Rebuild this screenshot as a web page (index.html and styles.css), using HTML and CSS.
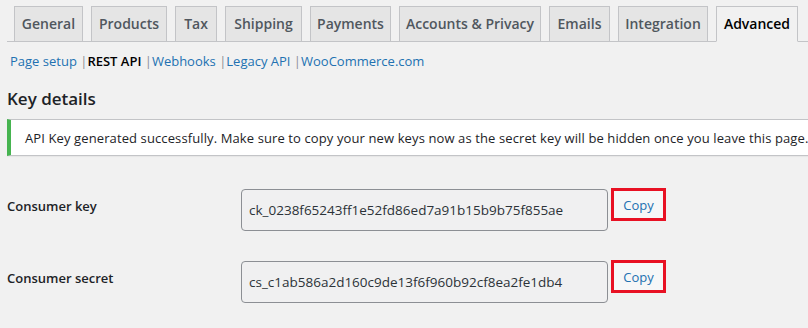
FILE: index.html
```html
<!DOCTYPE html>
<html>
<head>
    <link rel="stylesheet" href="styles.css">
</head>
<body>
    <div class="wrap">
        <nav class="nav-tab-wrapper">
            <a class="nav-tab" style="width:69px">General</a>
            <a class="nav-tab" style="width:76px">Products</a>
            <a class="nav-tab" style="width:42px">Tax</a>
            <a class="nav-tab" style="width:77px">Shipping</a>
            <a class="nav-tab" style="width:81px">Payments</a>
            <a class="nav-tab" style="width:142px">Accounts &amp; Privacy</a>
            <a class="nav-tab" style="width:61px">Emails</a>
            <a class="nav-tab" style="width:90px">Integration</a>
            <a class="nav-tab nav-tab-active" style="width:82px">Advanced</a>
        </nav>

        <ul class="subsubsub"><li><a href="#">Page setup</a> |</li><li><a class="current" href="#">REST API</a> |</li><li><a href="#">Webhooks</a> |</li><li><a href="#">Legacy API</a> |</li><li><a href="#">WooCommerce.com</a></li></ul>

        <h2 class="title">Key details</h2>

        <div class="notice">
            <p>API Key generated successfully. Make sure to copy your new keys now as the secret key will be hidden once you leave this page.</p>
        </div>

        <table class="form-table">
            <tr>
                <th>Consumer key</th>
                <td>
                    <div class="key-field">
                        <input type="text" class="key-input" readonly value="ck_0238f65243ff1e52fd86ed7a91b15b9b75f855ae">
                        <button class="copy-key">Copy</button>
                    </div>
                </td>
            </tr>
            <tr>
                <th>Consumer secret</th>
                <td>
                    <div class="key-field">
                        <input type="text" class="key-input" readonly value="cs_c1ab586a2d160c9de13f6f960b92cf8ea2fe1db4">
                        <button class="copy-key">Copy</button>
                    </div>
                </td>
            </tr>
        </table>
    </div>
</body>
</html>
```

FILE: styles.css
```css
body {
    margin: 0;
    background-color: #f1f1f1;
    font-family: "Open Sans", "Noto Sans", sans-serif;
    font-size: 13px;
    color: #1d2327;
    overflow: hidden;
}

.wrap {
    padding-left: 7px;
}

.nav-tab-wrapper {
    display: flex;
    gap: 8px;
    padding: 6px 0 0 7px;
    border-bottom: 1px solid #c3c4c7;
    height: 35px;
}

.nav-tab {
    box-sizing: border-box;
    height: 36px;
    margin-bottom: -1px;
    border: 1px solid #c3c4c7;
    background-color: #e5e5e5;
    color: #50575e;
    font-size: 14px;
    font-weight: 600;
    line-height: 34px;
    text-align: center;
    white-space: nowrap;
    text-decoration: none;
    flex-shrink: 0;
}

.nav-tab-active {
    background-color: #f1f1f1;
    border-bottom-color: #f1f1f1;
    color: #000;
}

.subsubsub {
    list-style: none;
    margin: 8px 0 0 3px;
    padding: 0;
    color: #8c8f94;
    font-size: 13px;
    line-height: 22px;
    white-space: nowrap;
}

.subsubsub li {
    display: inline;
}

.subsubsub a {
    color: #2271b1;
    text-decoration: none;
}

.subsubsub a.current {
    color: #000;
    font-weight: 600;
}

.title {
    margin: 16px 0 0;
    font-size: 17px;
    font-weight: 600;
    line-height: 22px;
    color: #1d2327;
}

.notice {
    width: 840px;
    margin-top: 9px;
    background: #fff;
    border: 1px solid #c3c4c7;
    border-left: 4px solid #46b450;
    box-shadow: 0 1px 1px rgba(0,0,0,0.04);
    height: 37px;
    box-sizing: border-box;
    padding-left: 14px;
}

.notice p {
    margin: 0;
    line-height: 37px;
    white-space: nowrap;
    letter-spacing: 0.11px;
}

.form-table {
    border-collapse: collapse;
    margin-top: 18px;
}

.form-table th {
    width: 224px;
    padding: 22px 10px 0 0;
    vertical-align: top;
    text-align: left;
    font-size: 13px;
    font-weight: 600;
    line-height: 20px;
    color: #1d2327;
}

.form-table td {
    padding: 15px 0;
    vertical-align: top;
}

.key-field {
    display: flex;
    align-items: flex-start;
    gap: 3px;
}

.key-input {
    box-sizing: border-box;
    width: 367px;
    height: 42px;
    margin: 0;
    padding: 0 7px;
    border: 1px solid #8c8f94;
    border-radius: 4px;
    background-color: #f0f0f1;
    color: #2c3338;
    font-family: inherit;
    font-size: 13.5px;
}

.copy-key {
    box-sizing: border-box;
    width: 55px;
    height: 33px;
    margin-top: -1px;
    padding: 0;
    border: 3px solid #e81123;
    background-color: #f6f7f7;
    color: #2271b1;
    font-family: inherit;
    font-size: 13px;
    cursor: pointer;
}
```
